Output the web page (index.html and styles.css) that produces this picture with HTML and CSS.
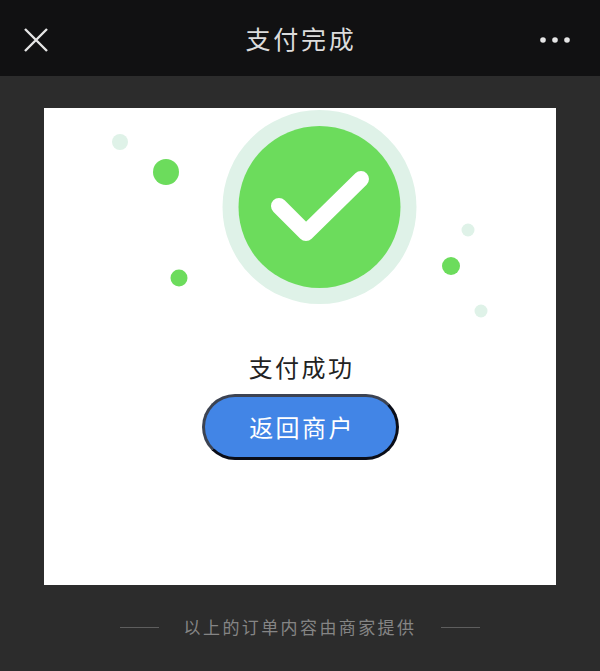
FILE: index.html
```html
<!DOCTYPE html>
<html lang="zh-CN">
<head>
    <meta charset="UTF-8">
    <meta name="viewport" content="width=device-width, initial-scale=1.0">
    <title>支付完成</title>
    <link rel="stylesheet" href="styles.css">
</head>
<body>
    <div class="header">
        <svg class="close-icon" width="24" height="24" viewBox="0 0 24 24">
            <path d="M1 1 L23 23 M23 1 L1 23" />
        </svg>
        <h1 class="page-title">支付完成</h1>
        <svg class="more-icon" width="30" height="6" viewBox="0 0 30 6">
            <circle cx="3" cy="3" r="2.8" />
            <circle cx="15" cy="3" r="2.8" />
            <circle cx="27" cy="3" r="2.8" />
        </svg>
    </div>

    <div class="content">
        <div class="card">
            <svg class="success-art" width="512" height="240" viewBox="0 0 512 240">
                <circle class="dot-light" cx="76" cy="34" r="8" />
                <circle class="dot-green" cx="122" cy="64" r="13" />
                <circle class="dot-green" cx="135" cy="170" r="8.5" />
                <circle class="dot-green" cx="407" cy="158" r="9" />
                <circle class="dot-light" cx="424" cy="122" r="6.5" />
                <circle class="dot-light" cx="437" cy="203" r="6.5" />
                <circle class="dot-light" cx="275.5" cy="99" r="97" />
                <circle class="dot-green" cx="275.5" cy="99" r="81" />
                <path class="check" d="M235 98 L262 125 L317 71" />
            </svg>
            <div class="success-text">支付成功</div>
            <button class="back-button">返回商户</button>
        </div>
        <div class="footer-note">
            <span class="footer-line"></span>
            <span class="footer-text">以上的订单内容由商家提供</span>
            <span class="footer-line"></span>
        </div>
    </div>
</body>
</html>
```

FILE: styles.css
```css
body {
    font-family: "Noto Sans CJK SC", "Liberation Sans", sans-serif;
    margin: 0;
    padding: 0;
    height: 671px;
    overflow: hidden;
    background-color: #2c2c2c;
}

.header {
    height: 76px;
    padding: 0 31px 0 24px;
    display: flex;
    align-items: center;
    justify-content: space-between;
    background-color: #111112;
}

.close-icon {
    fill: none;
    stroke: #e6e6e6;
    stroke-width: 2.4;
    margin-top: 4px;
}

.more-icon {
    fill: #e6e6e6;
    margin-top: 4px;
    margin-right: -1px;
}

.page-title {
    margin: 0 0 0 14px;
    font-size: 25px;
    font-weight: 400;
    letter-spacing: 2.8px;
    color: #dcdcdc;
}

.content {
    padding: 32px 44px 0;
}

.card {
    height: 477px;
    display: flex;
    flex-direction: column;
    align-items: center;
    background-color: #fff;
}

.success-art {
    display: block;
    flex-shrink: 0;
}

.dot-light {
    fill: #dff2e8;
}

.dot-green {
    fill: #6cdc5c;
}

.check {
    fill: none;
    stroke: #fff;
    stroke-width: 16;
    stroke-linecap: round;
    stroke-linejoin: round;
}

.success-text {
    font-size: 24px;
    line-height: 34px;
    letter-spacing: 2.4px;
    color: #222;
    margin-top: 2px;
    padding-left: 3px;
}

.back-button {
    width: 197px;
    height: 66px;
    margin-top: 10px;
    padding: 0 0 2px 4px;
    border: 3px solid #3c4352;
    border-bottom-color: #0a0d18;
    border-right-color: #0a0d18;
    border-radius: 33px;
    background-color: #4285e6;
    color: #fff;
    font-family: inherit;
    font-size: 24px;
    letter-spacing: 2.4px;
}

.footer-note {
    display: flex;
    align-items: center;
    justify-content: center;
    gap: 25px;
    margin-top: 31px;
}

.footer-line {
    width: 39px;
    height: 1px;
    background-color: #5e5e5e;
}

.footer-text {
    font-size: 17px;
    line-height: 22px;
    letter-spacing: 2.4px;
    color: #858585;
}
```
